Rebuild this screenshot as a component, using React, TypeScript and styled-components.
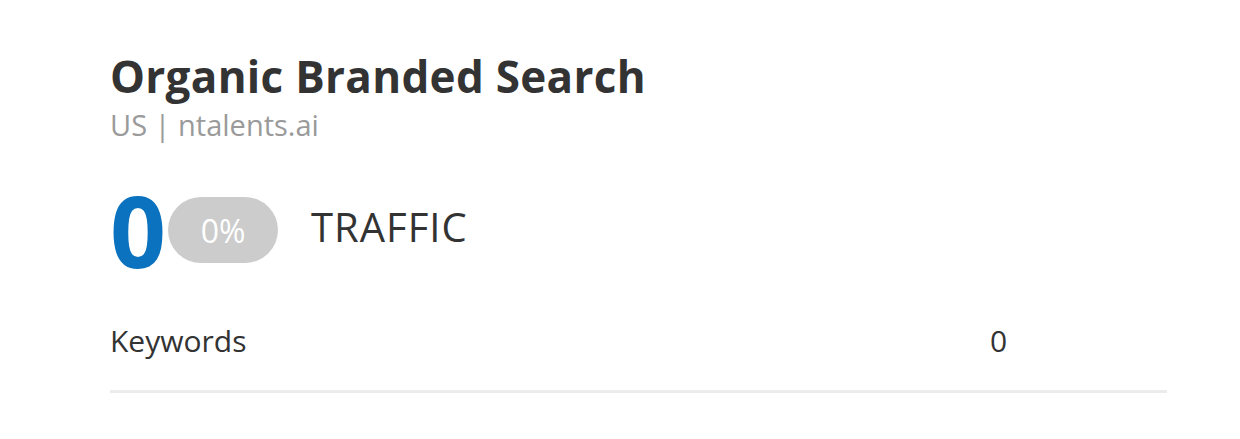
import styled, { createGlobalStyle } from "styled-components";

const GlobalStyle = createGlobalStyle`
    html, body {
        margin: 0;
        padding: 0;
        background: #ffffff;
    }
    body {
        font-family: "Open Sans", "Noto Sans", sans-serif;
        color: #333333;
    }
`;

const Card = styled.div`
    width: 1057px;
    padding: 50px 0 0 110px;
`;

const Title = styled.h1`
    margin: 0;
    font-size: 44px;
    font-weight: 700;
    line-height: 52px;
    letter-spacing: 0.3px;
    color: #333333;
`;

const Subtitle = styled.div`
    margin-top: 5px;
    font-size: 29px;
    line-height: 36px;
    color: #9a9a9a;
`;

const Summary = styled.div`
    display: flex;
    align-items: flex-start;
    margin-top: 38px;
    height: 90px;
`;

const BigValue = styled.span`
    font-size: 98px;
    font-weight: 700;
    line-height: 98px;
    color: #0a72be;
`;

const Pill = styled.span<{ $bg: string }>`
    display: inline-flex;
    align-items: center;
    justify-content: center;
    width: 110px;
    height: 66px;
    margin: 16px 0 0 2px;
    border-radius: 33px;
    background: ${(p) => p.$bg};
    color: #ffffff;
    font-size: 32px;
`;

const Label = styled.span`
    margin: 22px 0 0 33px;
    font-size: 40px;
    line-height: 48px;
    letter-spacing: 1px;
    color: #333333;
`;

const Row = styled.div`
    display: grid;
    grid-template-columns: 1fr 177px;
    align-items: center;
    margin-top: 50px;
    padding-bottom: 29px;
    border-bottom: 3px solid #ececec;
    font-size: 30px;
    line-height: 40px;
    color: #333333;
`;

export default function App() {
    return (
        <>
            <GlobalStyle />
            <Card>
                <Title>Organic Branded Search</Title>
                <Subtitle>US | ntalents.ai</Subtitle>
                <Summary>
                    <BigValue>0</BigValue>
                    <Pill $bg="#cccccc">0%</Pill>
                    <Label>TRAFFIC</Label>
                </Summary>
                <Row>
                    <span>Keywords</span>
                    <span>0</span>
                </Row>
            </Card>
        </>
    );
}
